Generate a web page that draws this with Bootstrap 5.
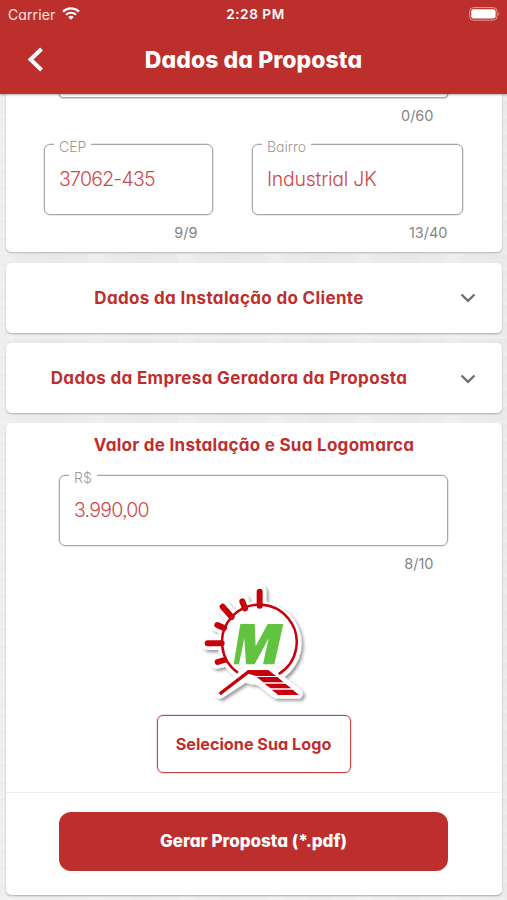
<!DOCTYPE html>
<html lang="pt-BR">
<head>
<meta charset="utf-8">
<meta name="viewport" content="width=device-width, initial-scale=1">
<title>Dados da Proposta</title>
<link href="https://cdn.jsdelivr.net/npm/bootstrap@5.3.0/dist/css/bootstrap.min.css" rel="stylesheet">
<style>
:root{--brand:#bd2f2d}
html,body{height:900px;overflow:hidden}
body{font-family:Inter,"Liberation Sans",sans-serif;font-feature-settings:"cv11","ss03";background:#ececec;
 background-image:repeating-linear-gradient(90deg,rgba(255,255,255,.15) 0 13px,transparent 19px 38px,rgba(0,0,0,.008) 44px 61px,transparent 67px 89px),repeating-linear-gradient(0deg,rgba(255,255,255,.2) 0 2px,transparent 4px 11px,rgba(0,0,0,.008) 13px 17px)}
button{font-feature-settings:inherit}
.app-head{height:93.5px;background:var(--brand);color:#fff;box-shadow:0 1px 2px rgba(0,0,0,.3);z-index:2;position:relative}
.status-row{height:28px;font-size:14px;padding:0 8px}
.status-row>*{flex:1 1 0}
.carrier{color:#ffe5e2;letter-spacing:.1px}
.clock{font-weight:600;font-size:13.6px;letter-spacing:.55px;white-space:nowrap;padding-left:4px}
.title-row{height:65px;display:grid;grid-template-columns:70px 1fr 70px}
.title-row h1{font-size:23px;letter-spacing:.06px;margin:0;font-weight:800}
.panel{background:#fff;border-radius:5px;box-shadow:0 1px 2px rgba(0,0,0,.27);margin:0 5px 0 6px}
.panel-address{height:158.5px;border-radius:0 0 5px 5px}
.panel-fold{height:70px;margin-top:10.5px}
.panel-value{height:472px;margin-top:10px}
.heading{color:var(--brand);font-weight:700;font-size:17px;letter-spacing:.34px;line-height:22px;white-space:nowrap;margin:0}
.panel-fold .heading{padding-left:19px}
.panel-value .heading{letter-spacing:.28px;padding-top:11px}
.outline-field{border:1px solid #a6a6a6;box-shadow:0 0 0 .5px rgba(150,150,150,.45);border-radius:6px;height:71px;position:relative;padding:21px 14px}
.outline-field label{position:absolute;left:9px;top:-8px;height:20px;line-height:20px;padding:0 5px;background:#fff;color:#999;font-size:14px;font-weight:300}
.field-value{color:#cd4949;font-size:19.5px;line-height:26px;font-weight:300;white-space:nowrap;letter-spacing:-.26px}
.field-digits{letter-spacing:-.76px}
.field-tail{height:4px;border:1px solid #a6a6a6;border-top:0;box-shadow:0 .5px 0 .5px rgba(150,150,150,.4);border-radius:0 0 5px 5px;margin:0 54px 0 53px}
.count{font-size:14.5px;line-height:20px;color:#858585;text-align:right;letter-spacing:0}
.count-wide{margin-right:68.5px}
.pair{display:grid;grid-template-columns:169px 211px;column-gap:39px;margin-left:38px}
.pair .count{padding-right:15.5px;margin-top:8px}
.chevron-slot{width:69px;padding-left:27px;padding-bottom:2px}
.brand-mark{display:block;margin:-4px 0 0 184px}
.logo-btn,.logo-btn:hover{width:194px;height:58px;border:1px solid #c34543;box-shadow:0 0 0 .5px rgba(195,69,67,.35);border-radius:6px;color:var(--brand);font-weight:700;font-size:16.2px;padding:0}
.pdf-btn,.pdf-btn:hover{height:59px;width:389px;background:var(--brand);color:#fff;border-radius:12px;font-weight:800;font-size:17px;margin:19px 0 0 53px;padding:0}
.split{border-top:1px solid #f0f0f0;margin-top:19px}
</style>
<script src="https://cdn.jsdelivr.net/npm/bootstrap@5.3.0/dist/js/bootstrap.bundle.min.js"></script>
</head>
<body>
<header class="app-head">
 <div class="status-row d-flex align-items-center">
  <div class="d-flex align-items-center carrier"><span>Carrier</span>
   <svg style="margin:-2px 0 0 7px" width="18" height="13" viewBox="0 0 18 13" fill="none" stroke="#fff" stroke-width="2.2"><path d="M1 4.6a11.4 11.4 0 0 1 16 0M4 7.8a7.1 7.1 0 0 1 10 0"/><path d="M6.2 10a4 4 0 0 1 5.6 0L9 12.8Z" fill="#fff" stroke="none"/></svg></div>
  <div class="text-center clock"><span>2:28 PM</span></div>
  <div class="d-flex justify-content-end"><svg style="margin-right:-2px" width="32" height="14" viewBox="0 0 32 14"><rect x=".6" y=".6" width="27.5" height="12.6" rx="3.8" fill="none" stroke="#e59a98"/><rect x="2.2" y="2.2" width="24.4" height="9.4" rx="2.3" fill="#fff"/><path d="M29.6 4.7q1.8 2.2 0 4.4Z" fill="#e59a98"/></svg></div>
 </div>
 <div class="title-row align-items-center">
  <svg width="70" height="30" viewBox="0 0 70 30" fill="none" stroke="#fff" stroke-width="4"><path d="M41.5 3 30.5 13.5l11 10.5"/></svg>
  <h1 class="text-center text-nowrap"><span>Dados da Proposta</span></h1>
 </div>
</header>
<main>
 <section class="panel panel-address">
  <div class="field-tail"></div>
  <div class="count count-wide" style="margin-top:8px">0/60</div>
  <div class="pair" style="margin-top:18px">
   <div><div class="outline-field"><label>CEP</label><div class="field-value field-digits"><span>37062-435</span></div></div><div class="count">9/9</div></div>
   <div><div class="outline-field"><label>Bairro</label><div class="field-value"><span>Industrial JK</span></div></div><div class="count">13/40</div></div>
  </div>
 </section>
 <section class="panel panel-fold d-flex align-items-center">
  <h2 class="heading flex-fill text-center"><span>Dados da Instalação do Cliente</span></h2>
  <div class="chevron-slot"><svg width="16" height="10" viewBox="0 0 16 10" fill="none" stroke="#6e6e6e" stroke-width="2.3"><path d="m1.5 1.5 6.5 6.3 6.5-6.3"/></svg></div>
 </section>
 <section class="panel panel-fold d-flex align-items-center">
  <h2 class="heading flex-fill text-center"><span>Dados da Empresa Geradora da Proposta</span></h2>
  <div class="chevron-slot"><svg width="16" height="10" viewBox="0 0 16 10" fill="none" stroke="#6e6e6e" stroke-width="2.3"><path d="m1.5 1.5 6.5 6.3 6.5-6.3"/></svg></div>
 </section>
 <section class="panel panel-value">
  <h2 class="heading text-center"><span>Valor de Instalação e Sua Logomarca</span></h2>
  <div class="outline-field" style="margin:19px 54px 0 53px"><label>R$</label><div class="field-value field-digits"><span>3.990,00</span></div></div>
  <div class="count count-wide" style="margin-top:8px">8/10</div>
  <div style="height:130px;padding-top:5px">
   <svg class="brand-mark" width="130" height="135" viewBox="0 0 390 405">
    <defs><filter id="lift" x="-10%" y="-10%" width="125%" height="125%"><feDropShadow dx="7" dy="7" stdDeviation="5" flood-color="#000" flood-opacity=".38"/></filter></defs>
    <g filter="url(#lift)" fill="#fff" stroke="#fff" stroke-linecap="round" stroke-linejoin="round">
     <circle cx="209" cy="205" r="125"/>
     <path stroke-width="40" d="M209 48v45M157 78l7 22M98 95l30 34M81 149l24 11M53 205h45M80 261l25-6"/>
     <path stroke-width="29" d="m90 356 84-69h61l89 69h-65l-70-55-23 5Z"/>
    </g>
    <g fill="none" stroke="#c8000b">
     <path stroke-width="7.5" d="M144 293A112 112 0 1 1 266 297"/>
     <path stroke-width="18" stroke-linecap="round" d="M209 50v42M157 79l8 21M98 95l27 31M82 150l20 9"/>
     <path stroke-width="18" stroke-linecap="round" d="M53 205h42M83 261l20-6"/>
     <path stroke-width="10" d="m89 357 86-66h62"/>
    </g>
    <path fill="#c8000b" d="M172 286h64l22 17h-60l-22-7ZM200 306h62l19 16h-61ZM223 326h63l18 14h-62ZM245 344h63l19 16h-62Z"/>
    <path fill="#62c341" d="M151 147h43l3 67 36-67h47l-27 121h-34l17-78-42 78h-26l-5-78-16 78h-16Z"/>
   </svg>
  </div>
  <div class="text-center" style="padding-right:1px;margin-top:11px"><button class="btn logo-btn"><span>Selecione Sua Logo</span></button></div>
  <div class="split"></div>
  <button class="btn pdf-btn"><span>Gerar Proposta (*.pdf)</span></button>
 </section>
</main>
</body>
</html>
